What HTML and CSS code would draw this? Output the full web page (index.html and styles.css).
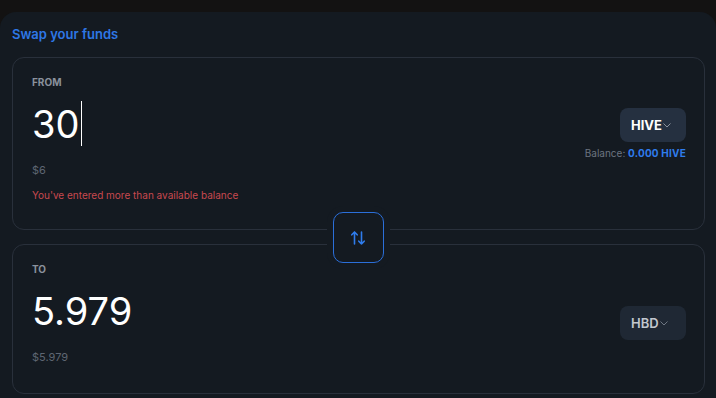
FILE: index.html
```html
<!DOCTYPE html>
<html lang="en">
<head>
    <meta charset="UTF-8">
    <meta name="viewport" content="width=device-width, initial-scale=1.0">
    <title>Swap</title>
    <link rel="stylesheet" href="styles.css">
</head>
<body>
    <div class="panel">
        <h2 class="title">Swap your funds</h2>

        <div class="card">
            <div class="label">FROM</div>
            <div class="row">
                <div class="amountCol">
                    <div class="amount">30<span class="caret"></span></div>
                    <div class="usd">$6</div>
                </div>
                <div class="selectCol">
                    <button class="tokenBtn">HIVE<svg class="chev" width="8" height="5" viewBox="0 0 8 5"><path d="M0.5 0.5 L4 4 L7.5 0.5" fill="none" stroke="#8a919b" stroke-width="1"/></svg></button>
                    <div class="balance">Balance: <b>0.000 HIVE</b></div>
                </div>
            </div>
            <div class="error">You've entered more than available balance</div>
        </div>

        <div class="gap">
            <button class="swapBtn">
                <svg width="16" height="16" viewBox="0 0 16 16" fill="none" stroke="#2f7cec" stroke-width="1.6" stroke-linecap="round" stroke-linejoin="round">
                    <path d="M4.5 14 V2 M1.8 4.8 L4.5 2 L7.2 4.8"/>
                    <path d="M11.5 2 V14 M8.8 11.2 L11.5 14 L14.2 11.2"/>
                </svg>
            </button>
        </div>

        <div class="card toCard">
            <div class="label">TO</div>
            <div class="row">
                <div class="amountCol">
                    <div class="amount">5.979</div>
                    <div class="usd">$5.979</div>
                </div>
                <div class="selectCol single">
                    <button class="tokenBtn disabled">HBD<svg class="chev" width="8" height="5" viewBox="0 0 8 5"><path d="M0.5 0.5 L4 4 L7.5 0.5" fill="none" stroke="#6f7783" stroke-width="1"/></svg></button>
                </div>
            </div>
        </div>
    </div>
</body>
</html>
```

FILE: styles.css
```css
body {
    margin: 0;
    background-color: #131212;
    font-family: Inter, "Noto Sans", sans-serif;
    color: white;
}
.panel {
    margin-top: 12px;
    background-color: #141a21;
    border-radius: 16px 16px 0 0;
    padding: 14px 11px 20px 12px;
}
.title {
    margin: 0 0 15px 0;
    font-size: 13px;
    line-height: 16px;
    font-weight: 600;
    color: #2e77e6;
}
.card {
    border: 1px solid #29303b;
    border-radius: 12px;
    padding: 18px 18px 28px 19px;
}
.toCard {
    padding-bottom: 29px;
}
.label {
    font-size: 10px;
    line-height: 12px;
    font-weight: 700;
    color: #8a919c;
    margin-bottom: 13px;
}
.row {
    display: flex;
    align-items: center;
    justify-content: space-between;
}
.amount {
    font-size: 38px;
    line-height: 46px;
    height: 46px;
    color: #ffffff;
}
.caret {
    display: inline-block;
    width: 1px;
    height: 45px;
    margin-left: 2px;
    background-color: #ffffff;
    vertical-align: top;
}
.usd {
    margin-top: 17px;
    font-size: 11px;
    line-height: 13px;
    color: #5e6672;
}
.error {
    margin-top: 12px;
    font-size: 10px;
    line-height: 12px;
    color: #c8494f;
}
.selectCol {
    display: flex;
    flex-direction: column;
    align-items: flex-end;
    margin-bottom: 12px;
}
.selectCol.single {
    margin-bottom: 6px;
}
.tokenBtn {
    display: flex;
    align-items: center;
    width: 66px;
    height: 34px;
    padding: 0 0 0 11px;
    border: none;
    border-radius: 8px;
    background-color: #253040;
    font-family: Inter, "Noto Sans", sans-serif;
    font-size: 13px;
    font-weight: 700;
    color: #ffffff;
}
.tokenBtn.disabled {
    background-color: #1f2834;
    color: #c2c7ce;
    font-weight: 600;
}
.chev {
    margin-left: 1px;
    margin-top: 1px;
}
.balance {
    margin-top: 5px;
    font-size: 10px;
    line-height: 12px;
    color: #6c7480;
}
.balance b {
    color: #2f7cec;
    font-weight: 700;
    letter-spacing: 0.2px;
}
.gap {
    position: relative;
    height: 14px;
}
.swapBtn {
    position: absolute;
    left: 50%;
    top: 50%;
    width: 51px;
    height: 51px;
    margin: -25px 0 0 -26px;
    display: flex;
    align-items: center;
    justify-content: center;
    padding: 0;
    border: 1px solid #2b6fd9;
    border-radius: 10px;
    background-color: #141a21;
    box-shadow: 0 0 0 6px #141a21;
}
```
